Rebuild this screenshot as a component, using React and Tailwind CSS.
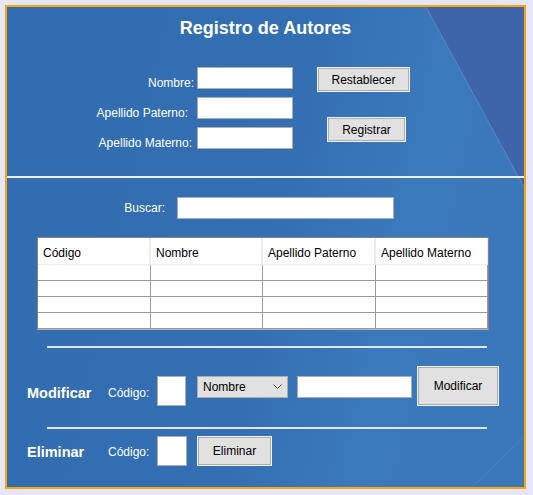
import React from "react";

const font = { fontFamily: '"Liberation Sans", Arial, sans-serif' };

function Btn({ className = "", children }) {
  return (
    <div
      className={
        "flex items-center justify-center bg-[#e1e1e1] border border-[#f2f2f2] shadow-[inset_0_0_0_1px_#adadad] text-[12px] text-black leading-[16px] " +
        className
      }
    >
      {children}
    </div>
  );
}

function Input({ className = "" }) {
  return <div className={"bg-white border border-[#abadb3] " + className} />;
}

const cols = ["w-[113px]", "w-[112px]", "w-[113px]", "w-[112px]"];
const heads = ["Código", "Nombre", "Apellido Paterno", "Apellido Materno"];

export default function App() {
  return (
    <div className="w-[533px] h-[495px] bg-[#e6e6fa] pt-[5px] pl-[5px]" style={font}>
      <div className="relative w-[521px] h-[484px] border-2 border-[#ffa500] overflow-hidden">
        <svg
          className="absolute inset-0"
          width="517"
          height="480"
          viewBox="0 0 517 480"
          preserveAspectRatio="none"
        >
          <defs>
            <linearGradient id="bg" x1="0" y1="0" x2="1" y2="0.2">
              <stop offset="0" stopColor="#336cb0" />
              <stop offset="0.6" stopColor="#346fb3" />
              <stop offset="0.82" stopColor="#3a79bb" />
              <stop offset="1" stopColor="#3a78bb" />
            </linearGradient>
          </defs>
          <rect x="0" y="0" width="517" height="480" fill="url(#bg)" />
          <polygon points="419,0 517,0 517,180" fill="#3e64aa" />
          <line x1="419" y1="0" x2="517" y2="180" stroke="#7aa6da" strokeOpacity="0.45" strokeWidth="1" />
          <line x1="463" y1="482" x2="519" y2="428" stroke="#7aa6da" strokeOpacity="0.25" strokeWidth="1" />
        </svg>

        <div className="relative flex flex-col">
          {/* Top section */}
          <div className="h-[169px] flex flex-col">
            <div className="pt-[9px] text-center text-white font-bold text-[18px] leading-[24px]">
              Registro de Autores
            </div>
            <div className="mt-[27px] flex items-start">
              <div className="flex flex-col gap-[8px]">
                <div className="flex items-start h-[22px]">
                  <div className="w-[190px] text-right pr-[3px] pt-[8px] text-white text-[12px] leading-[16px]">
                    Nombre:
                  </div>
                  <Input className="w-[96px] h-[22px]" />
                </div>
                <div className="flex items-start h-[22px]">
                  <div className="w-[190px] text-right pr-[9px] pt-[8px] text-white text-[12px] leading-[16px]">
                    Apellido Paterno:
                  </div>
                  <Input className="w-[96px] h-[22px]" />
                </div>
                <div className="flex items-start h-[22px]">
                  <div className="w-[190px] text-right pr-[5px] pt-[8px] text-white text-[12px] leading-[16px]">
                    Apellido Materno:
                  </div>
                  <Input className="w-[96px] h-[22px]" />
                </div>
              </div>
              <div className="ml-[24px] w-[93px] flex flex-col">
                <Btn className="w-[93px] h-[25px]">Restablecer</Btn>
                <Btn className="mt-[25px] ml-[10px] w-[79px] h-[25px]">Registrar</Btn>
              </div>
            </div>
          </div>

          <div className="h-[2px] bg-[#eef0f6]" />

          {/* Search */}
          <div className="mt-[19px] flex items-center h-[22px]">
            <div className="w-[158px] text-right text-white text-[12px] leading-[16px]">Buscar:</div>
            <Input className="ml-[12px] w-[217px] h-[22px]" />
          </div>

          {/* Table */}
          <div className="mt-[18px] ml-[30px] w-[452px] border border-[#828282] border-b-[#b4b4b4] bg-white">
            <div className="flex h-[27px] border-b border-[#ececec]">
              {heads.map((h, i) => (
                <div
                  key={h}
                  className={
                    cols[i] +
                    " h-full pl-[5px] pt-[3px] flex items-center text-[12px] leading-[16px] text-black " +
                    (i < 3 ? "border-r-2 border-[#ececec]" : "border-r border-[#ececec]")
                  }
                >
                  {h}
                </div>
              ))}
            </div>
            {[0, 1, 2, 3].map((r) => (
              <div key={r} className="flex h-[16px] border-b border-[#9a9a9a]">
                {cols.map((c, i) => (
                  <div key={i} className={c + " h-full border-r border-[#9a9a9a]"} />
                ))}
              </div>
            ))}
          </div>

          {/* Separator */}
          <div className="mt-[16px] ml-[40px] w-[440px] h-[2px] bg-[#e2e4ef]" />

          {/* Modificar */}
          <div className="mt-[18px] flex items-start">
            <div className="ml-[20px] w-[81px] mt-[18px] text-white font-bold text-[14.5px] leading-[18px]">
              Modificar
            </div>
            <div className="w-[49px] mt-[19px] text-white text-[12px] leading-[16px]">Código:</div>
            <Input className="mt-[10px] w-[29px] h-[30px]" />
            <div className="ml-[11px] mt-[10px] w-[91px] h-[22px] bg-[#e1e1e1] border border-[#adadad] flex items-center justify-between pl-[5px] pr-[5px] text-[12px] leading-[16px] text-black">
              <span>Nombre</span>
              <svg width="9" height="6" viewBox="0 0 9 6">
                <polyline points="0.5,0.5 4.5,4.5 8.5,0.5" fill="none" stroke="#444" strokeWidth="1" />
              </svg>
            </div>
            <Input className="ml-[9px] mt-[10px] w-[115px] h-[22px]" />
            <Btn className="ml-[5px] w-[82px] h-[40px]">Modificar</Btn>
          </div>

          {/* Separator */}
          <div className="mt-[21px] ml-[40px] w-[440px] h-[2px] bg-[#e2e4ef]" />

          {/* Eliminar */}
          <div className="mt-[7px] flex items-start">
            <div className="ml-[20px] w-[81px] mt-[7px] text-white font-bold text-[14.5px] leading-[18px]">
              Eliminar
            </div>
            <div className="w-[49px] mt-[8px] text-white text-[12px] leading-[16px]">Código:</div>
            <Input className="w-[30px] h-[30px]" />
            <Btn className="ml-[10px] w-[75px] h-[30px]">Eliminar</Btn>
          </div>
        </div>
      </div>
    </div>
  );
}
